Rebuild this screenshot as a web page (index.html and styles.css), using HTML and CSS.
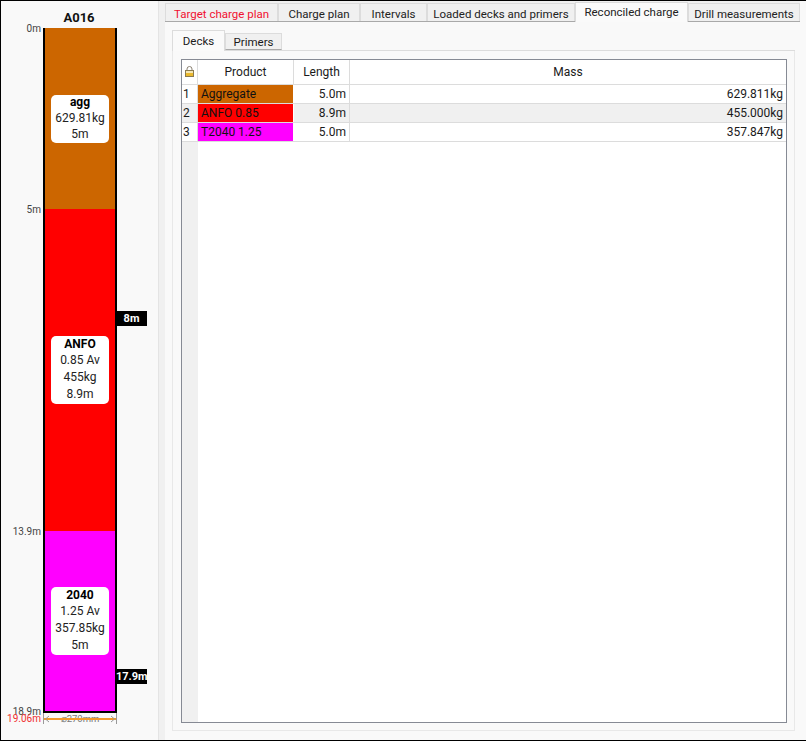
FILE: index.html
```html
<!DOCTYPE html>
<html lang="en">
<head>
  <meta charset="UTF-8">
  <title>Reconciled charge</title>
  <link rel="stylesheet" href="styles.css">
</head>
<body>
  <div class="window">

    <!-- HOLE CHART -->
    <div class="chart-panel">
      <div class="hole-title">A016</div>
      <div class="hole">
        <div class="deck deck-agg">
          <div class="deck-label">
            <b>agg</b>
            <span>629.81kg</span>
            <span>5m</span>
          </div>
        </div>
        <div class="deck deck-anfo">
          <div class="deck-label tall">
            <b>ANFO</b>
            <span>0.85 Av</span>
            <span>455kg</span>
            <span>8.9m</span>
          </div>
        </div>
        <div class="deck deck-t2040">
          <div class="deck-label tall">
            <b>2040</b>
            <span>1.25 Av</span>
            <span>357.85kg</span>
            <span>5m</span>
          </div>
        </div>

        <div class="depth depth-0">0m</div>
        <div class="depth depth-5">5m</div>
        <div class="depth depth-13">13.9m</div>
        <div class="depth depth-18">18.9m</div>
        <div class="depth depth-19">19.06m</div>

        <div class="primer primer-8">8m</div>
        <div class="primer primer-17">17.9m</div>

        <div class="diameter">
          <span class="diameter-text">⌀270mm</span>
          <span class="diameter-line"></span>
          <svg class="diameter-arrows" width="72" height="11" viewBox="0 0 72 11">
            <path d="M5 3L1.5 6L5 9M67 3L70.500 6L67 9" fill="none" stroke="#999" stroke-width="1"/>
          </svg>
        </div>
      </div>
    </div>

    <div class="splitter"></div>

    <!-- MAIN TABS -->
    <div class="main">
      <div class="tabs">
        <div class="tab tab-target">Target charge plan</div>
        <div class="tab tab-plan">Charge plan</div>
        <div class="tab tab-intervals">Intervals</div>
        <div class="tab tab-loaded">Loaded decks and primers</div>
        <div class="tab tab-reconciled active">Reconciled charge</div>
        <div class="tab tab-drill">Drill measurements</div>
      </div>

      <div class="main-pane">
        <div class="subtabs">
          <div class="subtab subtab-decks active">Decks</div>
          <div class="subtab subtab-primers">Primers</div>
        </div>

        <div class="sub-pane">
          <div class="grid">
            <div class="row head">
              <div class="cell gutter lock">
                <svg width="9" height="11" viewBox="0 0 9 11">
                  <path d="M2 5V3a2.5 2.5 0 0 1 5 0v2" fill="none" stroke="#8a8172" stroke-width="1"/>
                  <rect x="0.5" y="4.5" width="8" height="6" fill="#f4e6b4" stroke="#8a7a50"/>
                  <rect x="1" y="7" width="7" height="3" fill="#eab92e"/>
                </svg>
              </div>
              <div class="cell center">Product</div>
              <div class="cell center">Length</div>
              <div class="cell center">Mass</div>
            </div>
            <div class="row">
              <div class="cell gutter">1</div>
              <div class="cell swatch-agg">Aggregate</div>
              <div class="cell num">5.0m</div>
              <div class="cell num">629.811kg</div>
            </div>
            <div class="row alt">
              <div class="cell gutter">2</div>
              <div class="cell swatch-anfo">ANFO 0.85</div>
              <div class="cell num">8.9m</div>
              <div class="cell num">455.000kg</div>
            </div>
            <div class="row">
              <div class="cell gutter">3</div>
              <div class="cell swatch-t2040">T2040 1.25</div>
              <div class="cell num">5.0m</div>
              <div class="cell num">357.847kg</div>
            </div>
            <div class="grid-empty">
              <div class="gutter-fill"></div>
            </div>
          </div>
        </div>
      </div>
    </div>

  </div>
</body>
</html>
```

FILE: styles.css
```css
* {
  box-sizing: border-box;
}

html, body {
  margin: 0;
  height: 741px;
  overflow: hidden;
}

body {
  font-family: Roboto, 'Noto Sans', sans-serif;
  font-size: 11.5px;
  color: #1a1a1a;
  background: #f0f0f0;
}

.window {
  display: flex;
  width: 806px;
  height: 741px;
  border-top: 1px solid #000;
  border-left: 1px solid #000;
  border-bottom: 1px solid #000;
}

/* HOLE CHART */
.chart-panel {
  width: 158px;
  background: #f9f9f9;
  border-right: 1px solid #e4e4e4;
}

.hole-title {
  height: 27px;
  padding-top: 8px;
  padding-right: 1px;
  text-align: center;
  font-size: 13px;
  line-height: 17px;
  font-weight: bold;
  color: #111;
}

.hole {
  position: relative;
  width: 74px;
  height: 685px;
  margin-left: 42px;
  border-left: 2px solid #000;
  border-right: 2px solid #000;
  border-bottom: 2px solid #000;
}

.deck {
  display: flex;
  justify-content: center;
  align-items: center;
}

.deck-agg {
  height: 181px;
  background: #cc6600;
}

.deck-anfo {
  height: 322px;
  background: #ff0000;
}

.deck-t2040 {
  height: 180px;
  background: #ff00ff;
}

.deck-label {
  display: flex;
  flex-direction: column;
  width: 58px;
  padding-bottom: 1px;
  background: #fff;
  border-radius: 5px;
  text-align: center;
  line-height: 16px;
  font-size: 12px;
  color: #222;
}

.deck-label b {
  color: #000;
  line-height: 15px;
}

.deck-label.tall {
  line-height: 17px;
}

.deck-label.tall b {
  line-height: 16px;
}

.depth {
  position: absolute;
  right: 74px;
  font-size: 10px;
  line-height: 12px;
  color: #444;
  white-space: nowrap;
}

.depth-0 { top: -5px; }
.depth-5 { top: 176px; }
.depth-13 { top: 498px; }
.depth-18 { top: 678px; }
.depth-19 { top: 685px; color: #f03030; }

.primer {
  position: absolute;
  left: 71px;
  width: 31px;
  height: 15px;
  background: #000;
  color: #fff;
  font-weight: bold;
  font-size: 11px;
  line-height: 15px;
  text-align: center;
}

.primer-8 { top: 283px; }
.primer-17 { top: 641px; }

.diameter {
  position: absolute;
  left: -2px;
  top: 685px;
  width: 74px;
  height: 11px;
  border-left: 1px solid #999;
  border-right: 1px solid #999;
  text-align: center;
}

.diameter-text {
  display: block;
  font-size: 9.5px;
  line-height: 11px;
  color: #777;
}

.diameter-line {
  position: absolute;
  left: 0;
  right: 0;
  top: 5px;
  height: 2px;
  background: #f29a2e;
}

.diameter-arrows {
  position: absolute;
  left: 0;
  top: 0;
}

.splitter {
  width: 6px;
  background: #f0f0f0;
}

/* MAIN TABS */
.main {
  width: 641px;
  display: flex;
  flex-direction: column;
  background: #f9f9f9;
}

.tabs {
  display: flex;
  align-items: flex-end;
  height: 21px;
  background: #f0f0f0;
  border-bottom: 1px solid #a9a9a9;
  width: 635px;
}

.tab {
  height: 18px;
  text-align: center;
  line-height: 20px;
  background: #f0f0f0;
  border: 1px solid #dcdcdc;
  border-bottom: 0;
  color: #222;
  white-space: nowrap;
}

.tab-target { width: 113px; color: #f01030; }
.tab-plan { width: 82px; }
.tab-intervals { width: 67px; }
.tab-loaded { width: 148px; }
.tab-reconciled { width: 113px; }
.tab-drill { width: 112px; }

.tab.active {
  height: 20px;
  margin-bottom: -1px;
  line-height: 19px;
  background: #fafafa;
  position: relative;
}

.main-pane {
  flex: 1;
  padding: 8px 11px 9px 7px;
}

.subtabs {
  display: flex;
  align-items: flex-end;
  height: 21px;
  border-bottom: 1px solid #dcdcdc;
}

.subtab {
  height: 17px;
  line-height: 17px;
  text-align: center;
  background: #f0f0f0;
  border: 1px solid #dcdcdc;
  border-bottom: 1px solid #a9a9a9;
}

.subtab-decks { width: 53px; }
.subtab-primers { width: 57px; }

.subtab.active {
  height: 21px;
  margin-bottom: -1px;
  line-height: 20px;
  background: #fafafa;
  border-bottom: 0;
}

.sub-pane {
  height: 680px;
  padding: 8px 7px 8px 8px;
  border: 1px solid #e8e8e8;
  border-top: 0;
}

/* DECKS TABLE */
.grid {
  display: flex;
  flex-direction: column;
  height: 664px;
  background: #fff;
  border: 1px solid #868a94;
}

.row {
  display: grid;
  grid-template-columns: 16px 96px 56px 1fr;
  height: 19px;
  border-bottom: 1px solid #dcdcdc;
  line-height: 18px;
  font-size: 12px;
}

.row.head {
  height: 25px;
  line-height: 24px;
}

.row.alt {
  background: #f0f0f0;
}

.cell {
  padding: 0 3px;
  border-right: 1px solid #dcdcdc;
  white-space: nowrap;
}

.cell:last-child {
  border-right: 0;
}

.gutter {
  padding: 0 1px;
}

.lock {
  display: flex;
  justify-content: center;
  padding-top: 6px;
}

.center {
  text-align: center;
}

.num {
  text-align: right;
}

.swatch-agg { background: #cc6600; color: #111; border-right-color: #fff; }
.swatch-anfo { background: #ff0000; color: #111; border-right-color: #fff; }
.swatch-t2040 { background: #ff00ff; color: #111; border-right-color: #fff; }

.grid-empty {
  flex: 1;
  display: flex;
}

.gutter-fill {
  width: 16px;
  background: #f0f0f0;
}
```
